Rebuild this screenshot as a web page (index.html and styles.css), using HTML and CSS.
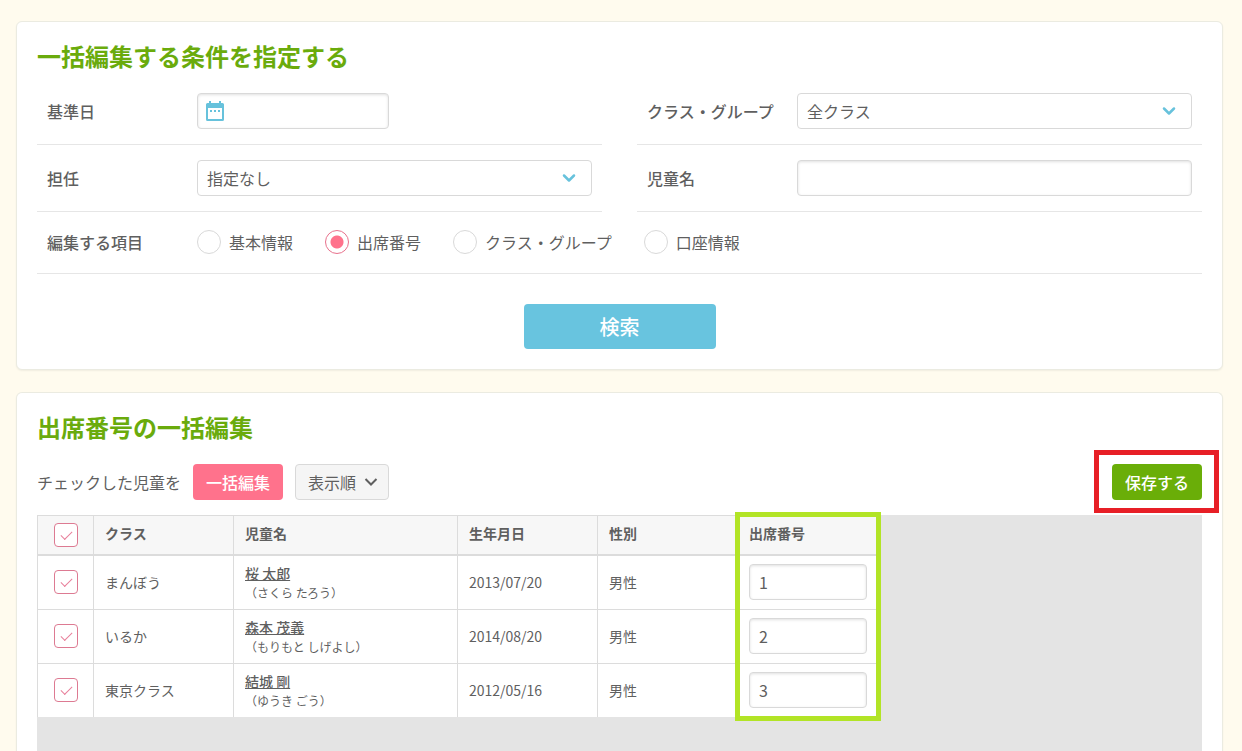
FILE: index.html
```html
<!DOCTYPE html>
<html lang="ja">
<head>
<meta charset="utf-8">
<meta name="viewport" content="width=device-width, initial-scale=1">
<title>出席番号の一括編集</title>
<link rel="stylesheet" href="styles.css">
</head>
<body>
<main class="page">
  <form class="panel">
    <h2 class="title">一括編集する条件を指定する</h2>
    <div class="conditions">
      <div class="field">
        <label class="field-label" for="base-date">基準日</label>
        <div class="control control-date">
          <input class="input" id="base-date" type="text">
          <svg class="calendar" viewBox="0 0 18 20" width="18" height="20" aria-hidden="true">
            <path fill="#67c2dc" fill-rule="evenodd" d="M3 0h2v2h8V0h2v2h1.500a1.500 1.500 0 0 1 1.500 1.500v15a1.500 1.500 0 0 1-1.500 1.500h-15A1.500 1.500 0 0 1 0 18.500v-15A1.500 1.500 0 0 1 1.500 2H3zM2 7v11h14V7zM4 9h2v2H4zM8 9h2v2H8zM12 9h2v2h-2z"/>
          </svg>
        </div>
      </div>
      <div class="field">
        <label class="field-label" for="group">クラス・グループ</label>
        <div class="control">
          <select class="input" id="group"><option>全クラス</option></select>
          <svg class="chevron" viewBox="0 0 14 10" width="14" height="10" aria-hidden="true"><path d="M2 2.500l5 5 5-5"/></svg>
        </div>
      </div>
      <div class="field">
        <label class="field-label" for="teacher">担任</label>
        <div class="control">
          <select class="input" id="teacher"><option>指定なし</option></select>
          <svg class="chevron" viewBox="0 0 14 10" width="14" height="10" aria-hidden="true"><path d="M2 2.500l5 5 5-5"/></svg>
        </div>
      </div>
      <div class="field">
        <label class="field-label" for="child-name">児童名</label>
        <div class="control"><input class="input" id="child-name" type="text"></div>
      </div>
      <div class="field field-wide" role="radiogroup" aria-labelledby="item-label">
        <span class="field-label" id="item-label">編集する項目</span>
        <div class="radios">
          <label class="radio"><input type="radio" name="item">基本情報</label>
          <label class="radio"><input type="radio" name="item" checked>出席番号</label>
          <label class="radio"><input type="radio" name="item">クラス・グループ</label>
          <label class="radio"><input type="radio" name="item">口座情報</label>
        </div>
      </div>
    </div>
    <button class="button button-search" type="button">検索</button>
  </form>

  <section class="panel panel-list">
    <h2 class="title">出席番号の一括編集</h2>
    <div class="toolbar">
      <span>チェックした児童を</span>
      <button class="button button-bulk" type="button">一括編集</button>
      <button class="button button-sort" type="button">表示順
        <svg class="sort-arrow" viewBox="0 0 14 10" width="14" height="10" aria-hidden="true"><path d="M1.500 2l5.500 5.500 5.500-5.500"/></svg>
      </button>
      <div class="save">
        <button class="button button-save" type="button">保存する</button>
        <span class="save-frame"></span>
      </div>
    </div>
    <div class="table-area">
      <div class="table-box">
        <table class="table">
          <colgroup><col class="col-check"><col class="col"><col class="col-name"><col class="col"><col class="col"><col class="col"></colgroup>
          <thead>
            <tr>
              <th class="check-cell"><input class="check" type="checkbox" aria-label="すべて選択" checked></th>
              <th>クラス</th><th>児童名</th><th>生年月日</th><th>性別</th><th>出席番号</th>
            </tr>
          </thead>
          <tbody>
            <tr>
              <td class="check-cell"><input class="check" type="checkbox" aria-label="桜 太郎を選択" checked></td>
              <td>まんぼう</td>
              <td class="name-cell"><a class="name" href="#">桜 太郎</a><span class="kana">（さくら たろう）</span></td>
              <td>2013/07/20</td><td>男性</td>
              <td><input class="input" type="text" aria-label="桜 太郎の出席番号" value="1"></td>
            </tr>
            <tr>
              <td class="check-cell"><input class="check" type="checkbox" aria-label="森本 茂義を選択" checked></td>
              <td>いるか</td>
              <td class="name-cell"><a class="name" href="#">森本 茂義</a><span class="kana">（もりもと しげよし）</span></td>
              <td>2014/08/20</td><td>男性</td>
              <td><input class="input" type="text" aria-label="森本 茂義の出席番号" value="2"></td>
            </tr>
            <tr>
              <td class="check-cell"><input class="check" type="checkbox" aria-label="結城 剛を選択" checked></td>
              <td>東京クラス</td>
              <td class="name-cell"><a class="name" href="#">結城 剛</a><span class="kana">（ゆうき ごう）</span></td>
              <td>2012/05/16</td><td>男性</td>
              <td><input class="input" type="text" aria-label="結城 剛の出席番号" value="3"></td>
            </tr>
          </tbody>
        </table>
        <span class="column-frame"></span>
      </div>
    </div>
  </section>
</main>
</body>
</html>
```
FILE: styles.css
```css
* { box-sizing: border-box; }

body {
  margin: 0;
  background: #fffbee;
  color: #5f5f5f;
  font: 16px/24px "Noto Sans CJK JP", sans-serif;
}

.page {
  display: flex;
  flex-direction: column;
  gap: 22px;
  min-height: 100vh;
  padding: 21px 19px 0 16px;
}

.panel {
  padding: 20px;
  background: #fff;
  border: 1px solid #ebebe1;
  border-radius: 6px;
  box-shadow: 0 1px 2px rgba(0, 0, 0, 0.06);
}

.panel-list {
  display: flex;
  flex: 1;
  flex-direction: column;
  padding-bottom: 0;
  border-bottom: 0;
  border-radius: 6px 6px 0 0;
}

.title {
  margin: 0 0 8px;
  color: #6aab0c;
  font-size: 24px;
  font-weight: 700;
  line-height: 28px;
}

.conditions {
  display: grid;
  grid-template-columns: 1fr 1fr;
  column-gap: 35px;
}

.field {
  display: flex;
  align-items: center;
  padding: 15px 10px;
  border-bottom: 1px solid #e6e6e6;
}

.field-wide {
  grid-column: 1 / -1;
  padding: 18px 10px 19px;
}

.field-label {
  flex: 0 0 150px;
  font-weight: 500;
}

.control {
  position: relative;
  flex: 1;
}

.control-date { flex: 0 0 192px; }

.input {
  display: block;
  width: 100%;
  height: 36px;
  padding: 0 9px;
  appearance: none;
  background: #fff;
  border: 1px solid #d9d9d9;
  border-radius: 4px;
  box-shadow: inset 0 1px 3px rgba(0, 0, 0, 0.12);
  color: inherit;
  font: inherit;
}

select.input { box-shadow: none; }

.control-date .input { padding-left: 36px; }

.calendar {
  position: absolute;
  top: 8px;
  left: 9px;
}

.chevron {
  position: absolute;
  top: 13px;
  right: 16px;
}

.chevron path,
.sort-arrow path {
  fill: none;
  stroke: #67c2dc;
  stroke-linecap: round;
  stroke-linejoin: round;
  stroke-width: 2.500;
}

.sort-arrow path {
  stroke: #5f5f5f;
  stroke-linecap: butt;
  stroke-linejoin: miter;
  stroke-width: 2;
}

.radios {
  display: flex;
  flex-wrap: wrap;
  gap: 32px;
}

.radio {
  display: flex;
  align-items: center;
  gap: 8px;
  line-height: 22px;
}

.radio input {
  width: 24px;
  height: 24px;
  margin: 0;
  appearance: none;
  background: #fff;
  border: 1px solid #d9d9d9;
  border-radius: 50%;
}

.radio input:checked {
  background: radial-gradient(circle, #ff728c 6px, #fff 7px);
  border-color: #e8718c;
}

.button {
  height: 36px;
  padding: 0 13px;
  border: 0;
  border-radius: 4px;
  color: #fff;
  font: inherit;
  font-weight: 500;
  white-space: nowrap;
}

.button-search {
  display: block;
  width: 192px;
  height: 45px;
  margin: 30px auto 0;
  background: #68c4df;
  font-size: 20px;
}

.toolbar {
  display: flex;
  align-items: center;
  gap: 12px;
  padding: 15px 0;
}

.button-bulk { background: #ff728c; }

.button-sort {
  display: flex;
  align-items: center;
  gap: 8px;
  padding: 0 10px 0 12px;
  background: #f5f5f5;
  border: 1px solid #d9d9d9;
  color: #5f5f5f;
  font-weight: 400;
}

.save {
  position: relative;
  margin-left: auto;
}

.button-save {
  display: block;
  background: #6aae08;
}

.save-frame {
  position: absolute;
  inset: -14px -17px -13px -18px;
  border: 5px solid #e71f26;
  pointer-events: none;
}

.table-area {
  flex: 1;
  min-height: 236px;
  background: #e4e4e4;
}

.table-box {
  position: relative;
  width: 840px;
}

.table {
  width: 100%;
  table-layout: fixed;
  border-spacing: 0;
  background: #fff;
  font-size: 14px;
  line-height: 20px;
}

.col-check { width: 56px; }
.col { width: 140px; }
.col-name { width: 224px; }

.table th,
.table td {
  height: 54px;
  padding: 0 10px 2px 11px;
  border-bottom: 1px solid #dcdcdc;
  border-left: 1px solid #dcdcdc;
  text-align: left;
}

.table th {
  height: 41px;
  padding-bottom: 4px;
  background: #f7f7f7;
  border-top: 1px solid #dcdcdc;
  border-bottom-width: 2px;
  font-weight: 700;
}

.table tbody tr:last-child td {
  height: 53px;
  border-bottom: 0;
}

.table .check-cell { padding: 0 16px 2px; }
.table th.check-cell { padding-bottom: 0; }
.table .name-cell { padding-bottom: 0; }

.table .input { font-size: 16px; }

.check {
  display: block;
  width: 24px;
  height: 24px;
  margin: 0;
  appearance: none;
  background: #fff;
  border: 1px solid #dd7a92;
  border-radius: 4px;
}

.check:checked::before {
  content: "";
  display: block;
  width: 10px;
  height: 5px;
  margin: 7px 0 0 6px;
  border: solid #e87f9a;
  border-width: 0 0 1px 1px;
  transform: rotate(-45deg);
}

.name {
  display: block;
  width: fit-content;
  color: inherit;
  font-weight: 500;
  text-decoration: underline;
}

.kana {
  display: block;
  font-size: 12px;
  line-height: 20px;
}

.column-frame {
  position: absolute;
  top: -3px;
  right: -4px;
  bottom: -4px;
  width: 146px;
  border: 5px solid #b2e426;
  pointer-events: none;
}
```
